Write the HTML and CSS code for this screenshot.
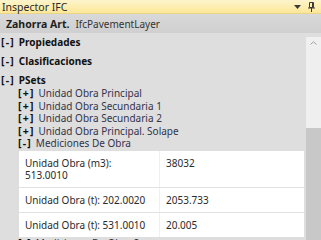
FILE: index.html
```html
<!DOCTYPE html>
<html>
<head>
<meta charset="utf-8">
<link rel="stylesheet" href="styles.css">
</head>
<body>
<div class="panel">
  <div class="titlebar">
    <span class="title">Inspector IFC</span>
    <span class="tools">
      <svg class="drop" width="7" height="4" viewBox="0 0 7 4"><path d="M0 0H7L3.5 4Z" fill="#3b3b3b"/></svg>
      <svg class="pin" width="7" height="10" viewBox="0 0 7 10"><path d="M1.5 0.5H5.5V5.5H1.5Z" fill="none" stroke="#3b3b3b"/><path d="M0 6H7" stroke="#3b3b3b"/><path d="M3.5 6V10" stroke="#3b3b3b"/><path d="M4.5 1V5.5" stroke="#3b3b3b"/></svg>
    </span>
  </div>
  <div class="header">
    <span class="hname">Zahorra Art.</span>
    <span class="htype">IfcPavementLayer</span>
  </div>
  <div class="main">
    <div class="content">
      <div class="group"><span class="mark">[-] </span>Propiedades</div>
      <div class="group"><span class="mark">[-] </span>Clasificaciones</div>
      <div class="group psets"><span class="mark">[-] </span>PSets</div>
      <div class="items">
        <div class="item"><span class="mark">[+] </span>Unidad Obra Principal</div>
        <div class="item"><span class="mark">[+] </span>Unidad Obra Secundaria 1</div>
        <div class="item"><span class="mark">[+] </span>Unidad Obra Secundaria 2</div>
        <div class="item"><span class="mark">[+] </span>Unidad Obra Principal. Solape</div>
        <div class="item"><span class="mark">[-] </span>Mediciones De Obra</div>
      </div>
      <div class="table">
        <div class="trow">
          <div class="cell c1">Unidad Obra (m3):<br>513.0010</div>
          <div class="cell c2">38032</div>
        </div>
        <div class="trow">
          <div class="cell c1">Unidad Obra (t): 202.0020</div>
          <div class="cell c2">2053.733</div>
        </div>
        <div class="trow">
          <div class="cell c1">Unidad Obra (t): 531.0010</div>
          <div class="cell c2">20.005</div>
        </div>
      </div>
      <div class="item last"><span class="mark">[-] </span>Mediciones De Obra S</div>
    </div>
    <div class="scrollbar">
      <div class="sb-up"><svg width="7" height="4" viewBox="0 0 7 4"><path d="M0.5 3.5L3.5 0.8L6.5 3.5" fill="none" stroke="#a0a0a0" stroke-width="1"/></svg></div>
      <div class="sb-track"></div>
      <div class="sb-thumb"></div>
    </div>
  </div>
</div>
</body>
</html>
```

FILE: styles.css
```css
html, body {
  margin: 0;
  padding: 0;
}
body {
  width: 321px;
  height: 240px;
  overflow: hidden;
  font-family: "Segoe UI", "Noto Sans", "Open Sans", sans-serif;
  font-size: 10px;
  color: #222;
  background: #dcdcdc;
}
.panel {
  display: flex;
  flex-direction: column;
  width: 321px;
  height: 240px;
}
.titlebar {
  height: 14px;
  flex: none;
  display: flex;
  align-items: center;
  justify-content: space-between;
  padding: 0 6px 0 2px;
  background: linear-gradient(#fdf4cc, #fce797);
  border-bottom: 1px solid #e9d58a;
  box-sizing: border-box;
}
.title {
  font-size: 10.5px;
  color: #2a2a2a;
  line-height: 14px;
}
.tools {
  display: flex;
  align-items: center;
  gap: 7px;
}
.header {
  height: 19px;
  flex: none;
  display: flex;
  align-items: center;
  padding-left: 6px;
  gap: 6px;
  background: linear-gradient(#d9d9d9, #cfcfcf);
}
.hname {
  font-weight: bold;
  font-size: 10.5px;
  color: #1e1e1e;
}
.htype {
  color: #333;
}
.main {
  flex: 1;
  display: flex;
  min-height: 0;
  background: #dedede;
}
.content {
  flex: 1;
  padding: 3px 0 0 1px;
  overflow: hidden;
}
.group {
  font-weight: bold;
  line-height: 13px;
  color: #111;
  margin-bottom: 6px;
  white-space: pre;
}
.group.psets {
  margin-bottom: 0;
}
.mark {
  font-weight: bold;
  font-size: 10.5px;
  letter-spacing: 1.2px;
  color: #111;
  white-space: pre;
}
.items {
  padding-left: 17px;
}
.item {
  line-height: 12.6px;
  color: #33334a;
  white-space: pre;
}
.item.last {
  padding-left: 17px;
  line-height: 13px;
}
.table {
  margin: 1px 2px 0 18px;
  background: #fff;
  display: flex;
  flex-direction: column;
}
.trow {
  display: flex;
  border-bottom: 1px solid #e2e2e2;
}
.trow:last-child {
  border-bottom: none;
}
.cell {
  line-height: 12px;
  padding: 6px 6px;
  color: #2a2a2a;
}
.c1 {
  width: 141px;
  box-sizing: border-box;
  border-right: 1px solid #f0f0f0;
}
.c2 {
  flex: 1;
}
.scrollbar {
  width: 15px;
  flex: none;
  margin-top: 4px;
  display: flex;
  flex-direction: column;
}
.sb-up {
  height: 12px;
  display: flex;
  align-items: center;
  justify-content: center;
  background: #f0f0f0;
}
.sb-track {
  height: 79px;
  background: #efefef;
}
.sb-thumb {
  flex: 1;
  background: #c8c8c8;
}
```
